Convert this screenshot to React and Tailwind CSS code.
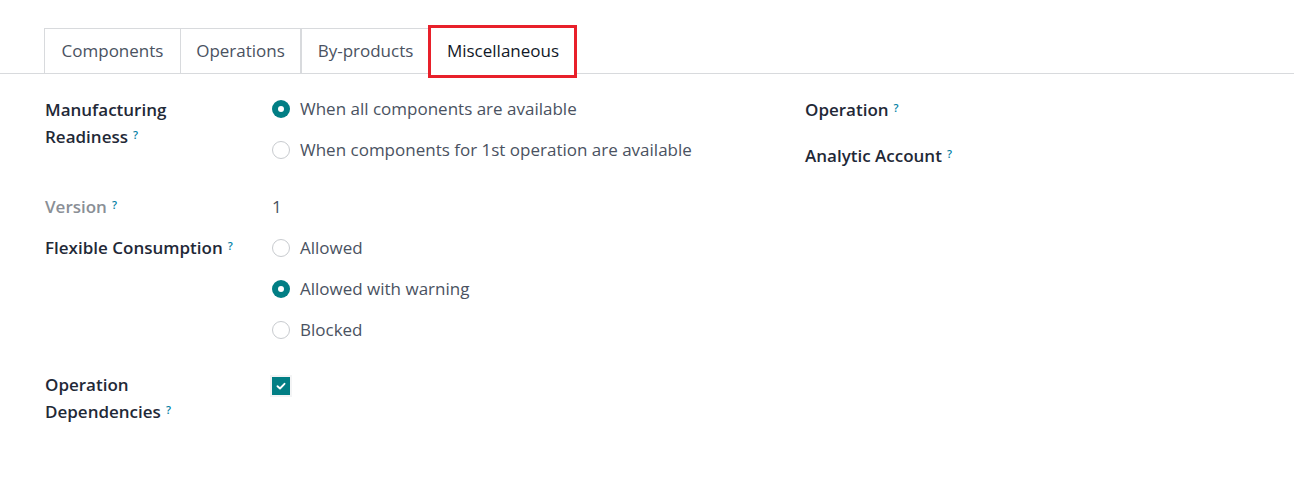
const font = { fontFamily: '"Open Sans", "Noto Sans", sans-serif' };

function Help() {
  return <sup className="ml-[5px] text-[11px] font-semibold text-[#0180a5] relative -top-[4px]">?</sup>;
}

function Radio({ checked, label }) {
  return (
    <label className="flex items-center h-[22px]">
      {checked ? (
        <span className="w-[18px] h-[18px] rounded-full bg-[#017e84] flex items-center justify-center">
          <span className="w-[6px] h-[6px] rounded-full bg-white" />
        </span>
      ) : (
        <span className="w-[18px] h-[18px] rounded-full border border-[#c8cbcf] bg-white" />
      )}
      <span className="ml-[10px] text-[17px] text-[#4a5261]">{label}</span>
    </label>
  );
}

function Label({ children, muted }) {
  return (
    <div
      className={`text-[17px] leading-[27px] font-semibold ${muted ? "text-[#8a8f96]" : "text-[#1f2937]"}`}
    >
      {children}
    </div>
  );
}

export default function App() {
  const tabs = [
    ["Components", "w-[136px]"],
    ["Operations", "w-[121px] border-r"],
    ["By-products", "w-[129px] border-r"],
  ];
  return (
    <div className="w-[1294px] h-[480px] bg-white" style={font}>
      <div className="pt-[28px] border-b border-[#d8dadd] flex pl-[44px]">
        {tabs.map(([t, cls]) => (
          <div
            key={t}
            className={`h-[45px] flex items-center justify-center text-[17px] text-[#4a5261] border-t border-l border-[#d8dadd] -mb-px ${cls}`}
          >
            {t}
          </div>
        ))}
        <div className="relative -mb-px">
          <div className="h-[46px] w-[146px] flex items-center justify-center text-[17px] text-[#111827] bg-white">
            Miscellaneous
          </div>
          <div className="absolute -left-[2px] -right-[1px] -top-[3px] -bottom-[4px] border-[3px] border-[#e8202a]" />
        </div>
      </div>

      <div className="flex pl-[45px] pt-[22px]">
        <div className="w-[760px]">
          <div className="grid grid-cols-[227px_1fr]">
            <Label>
              Manufacturing
              <br />
              Readiness
              <Help />
            </Label>
            <div className="flex flex-col gap-[19px] pt-[2px]">
              <Radio checked label="When all components are available" />
              <Radio label="When components for 1st operation are available" />
            </div>

            <div className="mt-[32px]">
              <Label muted>
                Version
                <Help />
              </Label>
            </div>
            <div className="mt-[32px] text-[17px] leading-[27px] text-[#4a5261]">1</div>

            <div className="mt-[14px]">
              <Label>
                Flexible Consumption
                <Help />
              </Label>
            </div>
            <div className="mt-[17px] flex flex-col gap-[19px]">
              <Radio label="Allowed" />
              <Radio checked label="Allowed with warning" />
              <Radio label="Blocked" />
            </div>

            <div className="mt-[30px]">
              <Label>
                Operation
                <br />
                Dependencies
                <Help />
              </Label>
            </div>
            <div className="mt-[32px]">
              <span className="inline-flex w-[22px] h-[22px] -ml-[2px] bg-[#f3f4f5] items-center justify-center">
                <span className="w-[18px] h-[18px] bg-[#017e84] flex items-center justify-center">
                  <svg width="10" height="10" viewBox="0 0 10 10">
                    <path d="M1.5 5.2 L4 7.5 L8.5 2.8" fill="none" stroke="white" strokeWidth="1.9" strokeLinecap="round" strokeLinejoin="round" />
                  </svg>
                </span>
              </span>
            </div>
          </div>
        </div>

        <div className="flex flex-col gap-[19px]">
          <Label>
            Operation
            <Help />
          </Label>
          <Label>
            Analytic Account
            <Help />
          </Label>
        </div>
      </div>
    </div>
  );
}
